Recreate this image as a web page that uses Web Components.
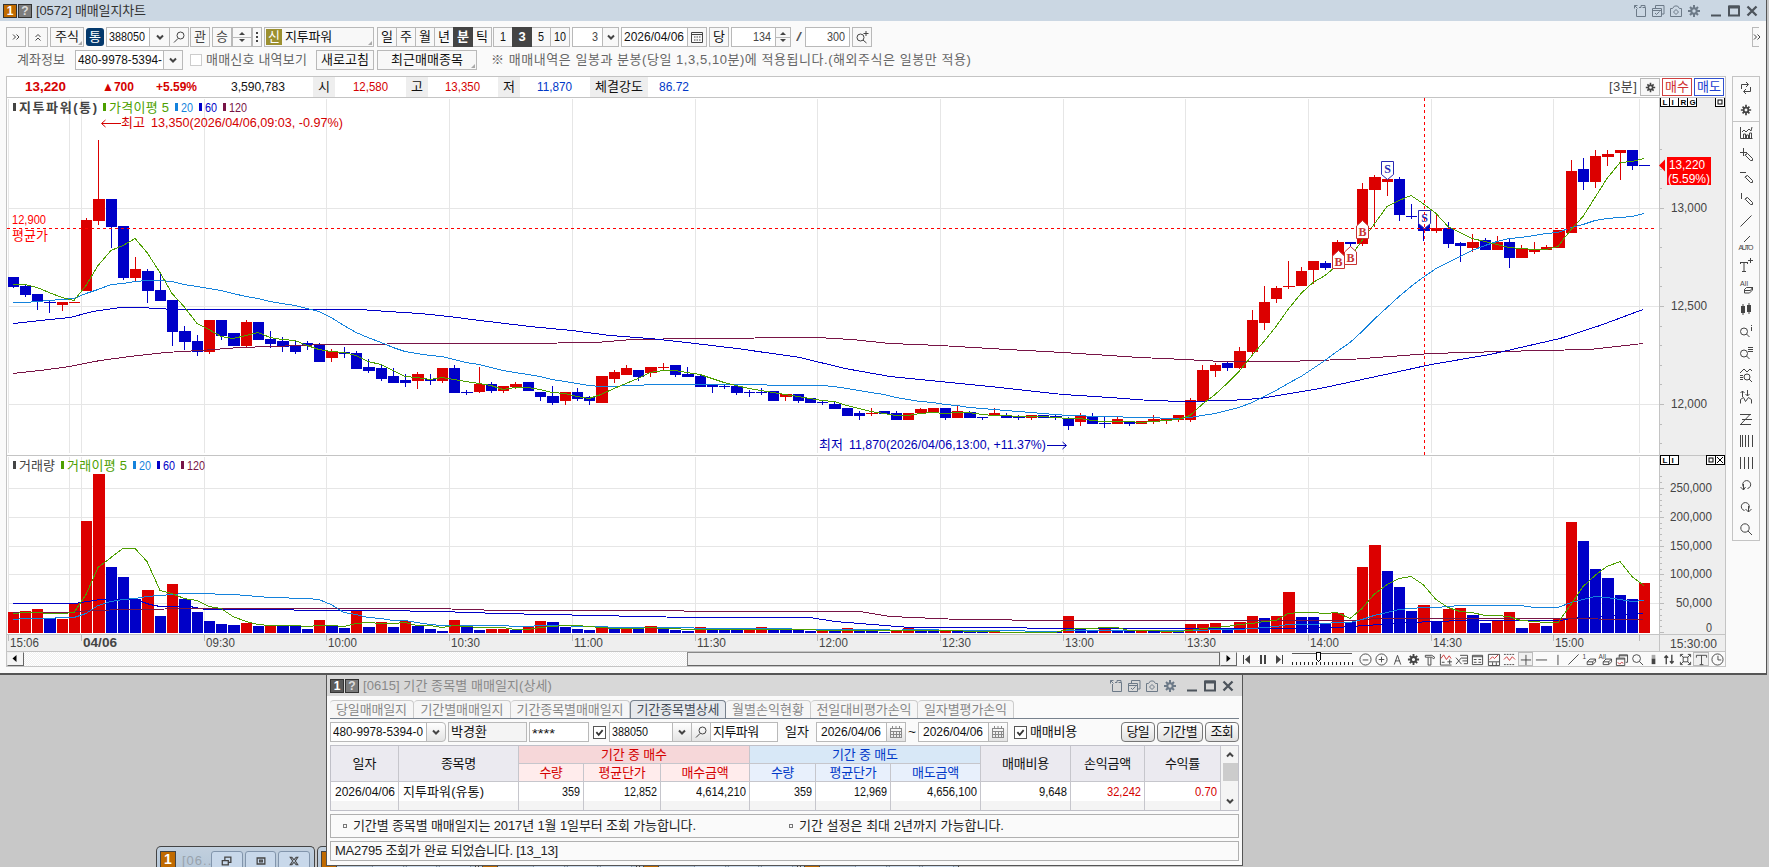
<!DOCTYPE html>
<html lang="ko">
<head>
<meta charset="utf-8">
<title>매매일지차트</title>
<style>
    html, body { margin: 0; height: 100%; overflow: hidden; background: #c8c8c8; }
</style>
</head>
<body>
<trade-desktop></trade-desktop>
<script>
const FONT = '"Liberation Sans","Noto Sans CJK KR",sans-serif';
const HANGUL = /[가-힣]/;

class BaseElement extends HTMLElement {
    constructor() {
        super();
        this.attachShadow({mode: "open"});
    }
    connectedCallback() {
        this.shadowRoot.innerHTML = this.render();
    }
}

/* text fitted to a fixed width: figures are condensed, Hangul is spaced */
class FitText extends BaseElement {
    render() {
        return `<style>
            :host { display: block; white-space: pre; flex: none; line-height: 16px; }
            span { display: inline-block; transform-origin: 0 50%; }
        </style><span><slot></slot></span>`;
    }
    connectedCallback() {
        super.connectedCallback();
        const w = Number(this.getAttribute('w'));
        this.style.width = w + 'px';
        const span = this.shadowRoot.querySelector('span');
        const natural = span.getBoundingClientRect().width;
        const n = this.textContent.length;
        if (!HANGUL.test(this.textContent)) {
            span.style.transform = `scaleX(${w / natural})`;
        } else if (n > 1) {
            span.style.letterSpacing = ((w - natural) / (n - 0.5)) + 'px';
        }
    }
}
customElements.define('fit-text', FitText);

const GEAR = '<path d="M7 1v12M1 7h12M3 3l8 8M11 3l-8 8" stroke-width="2"/><circle cx="7" cy="7" r="2.7" stroke-width="2" fill="var(--hole,#fafafa)"/>';
const ERASER = '<path d="M4.500 9.500l3-3h6l-3 3zM4.500 9.500v3h6v-3M10.500 12.500l3-3v-3"/>';
const PEN = '<path d="M6.500 6.500l2 -1 5 5v2h-2l-5-5zM8 5.500l-2 2"/>';
const ICONS = {
    right2: '<path d="M4 4.500l2.500 2.500-2.500 2.500M7.500 4.500l2.500 2.500-2.500 2.500"/>',
    up2: '<path d="M4.500 7l2.500-2.500 2.500 2.500M4.500 10.500l2.500-2.500 2.500 2.500"/>',
    down: '<path d="M4 5.500l3 3 3-3" stroke-width="2"/>',
    up: '<path d="M4 8.500l3-3 3 3" stroke-width="2"/>',
    find: '<circle cx="8.500" cy="5.500" r="3.500"/><path d="M6 8.500l-4 4"/>',
    zoom: '<circle cx="6" cy="6" r="4.200"/><path d="M9 9l4 4"/>',
    findplus: '<circle cx="5.500" cy="7.500" r="3.500"/><path d="M8 10l3.500 3M11 1v5M8.500 3.500h5"/>',
    cal: '<path d="M1.500 2.500h11v10h-11zM1.500 4.500h11" /><path d="M4 7h1.500M6.500 7h1.500M9 7h1.500M4 10h1.500M6.500 10h1.500M9 10h1.500"/>',
    cal2: '<path d="M1 3.500h12M1.500 4v9M4.500 6v7M7.500 6v7M10.500 6v7M12.500 4v9M1 6.500h12M1 9.500h12M1 12.500h12M3.500 1v3M7 1v3M10.500 1v3" stroke="#888"/>',
    dots: '<path d="M6 2h2v2h-2zM6 6h2v2h-2zM6 10h2v2h-2z" fill="#444" stroke="none"/>',
    gear: GEAR,
    pin: '<path d="M3.500 5v7.500h9v-9h-3M1.500 4.500v-3h3M1.500 1.500l3 3M6 3.500h2v-2h4v2"/>',
    copy: '<path d="M1.500 4.500h9v8h-9zM1.500 6.500h9M4.500 4v-2.500h8.500v8.500h-2.500M4 9l1.500 1.500 3-3"/>',
    camera: '<path d="M1.500 4.500h2l2-2.500h3l2 2.500h2v8h-11z"/><path d="M7 5.500l2.500 2.500-2.500 2.500-2.500-2.500z"/>',
    min: '<path d="M2 11.500h10" stroke-width="2"/>',
    max: '<path d="M2 2.500h10v9h-10z" stroke-width="2"/><path d="M2 3h10" stroke-width="3"/>',
    close: '<path d="M2.500 2.500l9 9M11.500 2.500l-9 9" stroke-width="2.300"/>',
    restore: '<path d="M1.500 6.500h7v5h-7zM4.500 6v-3.500h7v6h-3" stroke-width="1.500"/>',
    smallmax: '<path d="M2.500 3.500h9v7h-9zM5.500 6h3v2h-3z" stroke-width="1.500"/>',
    cross2: '<path d="M2.500 2.500h2l2.500 3 2.500-3h2l-3 4.500 3 4.500h-2l-2.500-3-2.500 3h-2l3-4.500z" stroke-width="1.200"/>',
    cycle: '<path d="M2.500 8v-4.500h6.500M7 1l2.500 2.500-2.500 2.500M11.500 6v4.500h-6.500M7 8l-2.500 2.500 2.500 2.500"/>',
    chart: '<path d="M1.500 1v11.500h12M4.500 12v-4h2v4M7.500 12v-3h2v3M10.500 12v-5h2v5M3 6l2-2 2 2 3-3 2 2 1-4"/>',
    plusline: '<path d="M4.500 0v8M1 4.500h7"/>' + PEN,
    hline: '<path d="M1 2.500h6"/>' + PEN,
    vline: '<path d="M2.500 1v6"/>' + PEN,
    line: '<path d="M1.500 12.500l11-11"/>',
    auto: '<path d="M5 6l6-6"/><text x="-0.500" y="14" textLength="15">AUTO</text>',
    textplus: '<path d="M1 4.500h8M5 4.500v9M3 13.500h4M1.500 4v2M8.500 4v2M11.500 0v5M9 2.500h5"/>',
    all: '<text x="1" y="6" textLength="8">All</text><path d="M5.500 9.500l2-2h6l-2 3h-6zM5.500 9.500v3.500h5l3-3v-3"/>',
    candles: '<path d="M2 4h4v7h-4zM8 3h4v7h-4zM3.500 2h1v11h-1zM9.500 1h1v11h-1z" fill="#444" stroke="none"/>',
    findi: '<circle cx="5" cy="7.500" r="3.500"/><path d="M7.500 10l3 3M12.500 3v4M12.500 1v1"/>',
    findlist: '<circle cx="5" cy="7.500" r="3.500"/><path d="M7.500 10l3 3M9 1.500h5M9 3.500h5M9 5.500h5"/>',
    findchart: '<circle cx="8" cy="9" r="3"/><path d="M10 11l3 3M1 5l4-4 3 3 3-3 2 2M1 7.500h3M1 9.500h3M1 11.500h3"/>',
    peaks: '<path d="M3.500 1v6M1.500 3l2-2 2 2M8.500 0v6M6.500 4l2 2 2-2M1.500 13.500v-4l3-2 2 4 3-4 3 2v4"/>',
    trend: '<path d="M1 2.500h11M3 7.500h10M1 12.500h11M2 12l9-9.500"/>',
    bars1: '<path d="M1.500 1v12M3.500 1v12M6.500 1v12M9.500 1v12M13.500 1v12"/>',
    bars2: '<path d="M1.500 1v12M5.500 1v12M9.500 1v12M13.500 1v12"/>',
    back: '<path d="M4.500 9a4 4 0 1 1 4 1.500M4.500 6v6M1.500 9l3 3 2-3"/>',
    forward: '<path d="M9.500 9a4 4 0 1 0-4 1.500M9.500 6v6M6.500 9l3 3 3-3"/>',
    zoomout: '<circle cx="7" cy="7" r="6"/><path d="M4 7.500h6"/>',
    zoomin: '<circle cx="7" cy="7" r="6"/><path d="M4 7h6M7 4v6"/>',
    letter: '<path d="M3.500 12.500l3.500-10 3.500 10M4.500 8.500h5"/>',
    hammer: '<path d="M2.500 2.500h7l3 2-1 2-2-2h-7zM5.500 5v8h3v-8"/>',
    addchart: '<path d="M1.500 1v12h12M3 10h3"/><path d="M2 6l3-4 3 5 3-4 2 3" stroke="#c33"/><path d="M9 9.500h5M11.500 7v5"/>',
    excel: '<path d="M5.500 2.500h8v9h-4M1 5l6 7M7 5l-6 7M7 5.500h6M8 8.500h5"/>',
    table: '<path d="M1.500 2.500h11v10h-11zM1.500 4h11M3 7h3M8 7h3M3 10h3M8 10h3"/>',
    panel: '<path d="M1.500 1.500h12v12h-12zM2 9.500h11M6 10v3M10 10v3"/><path d="M3 7l3-3 2 2 4-4" stroke="#c33"/>',
    wave: '<path d="M1 1.500h12M1 12.500h12" stroke-dasharray="2 1"/><path d="M1 7l3-3 3 4 3-4 3 3" stroke="#c33"/>',
    cross: '<path d="M7.500 2v11M2 7.500h11"/>',
    dash: '<path d="M1 7.500h12"/>',
    pipe: '<path d="M7.500 2v11"/>',
    erase1: '<text x="-0.500" y="6">1</text>' + ERASER,
    eraseall: '<text x="-0.500" y="6" textLength="8">All</text>' + ERASER,
    windows: '<path d="M1.500 5.500h9v8h-9zM1.500 6.500h9M4.500 5v-3h9v8h-2M4.500 3h9"/><path d="M3 10l2 2 2-2 2 1" stroke="#c33"/>',
    level: '<path d="M5 2h4v4h-4z" fill="#aaa" stroke="none"/><path d="M5 6h4v6h-4z" fill="#444" stroke="none"/>',
    updown: '<path d="M3.500 12v-9M1.500 5l2-2 2 2M9.500 2v9M7.500 9l2 2 2-2" stroke-width="1.500"/>',
    expand: '<path d="M4.500 4.500h5v5h-5zM1.500 4v-2.500h3M9.500 1.500h3v3M12.500 9.500v3h-3M4 12.500h-2.500v-3M2 2l3 3M12 2l-3 3M12 12l-3-3M2 12l3-3"/>',
    type: '<path d="M1.500 5v-2.500h11v2.500M7 2.500v10M5 12.500h4"/>',
    clock: '<circle cx="7" cy="7" r="6"/><path d="M7.500 3v4.500h3.500"/>',
    first: '<path d="M3.500 3v9"/><path d="M10 3v9l-5-4.500z" fill="#444" stroke="none"/>',
    pause: '<path d="M4 3h2v9h-2zM8 3h2v9h-2z" fill="#444" stroke="none"/>',
    last: '<path d="M10.500 3v9"/><path d="M4 3v9l5-4.500z" fill="#444" stroke="none"/>',
    check: '<path d="M3 6.500l3 3.500 5-6" stroke-width="2.200"/>',
    left1: '<path d="M8.500 4v7l-4-3.500z" fill="#000" stroke="none"/>',
    right1: '<path d="M5.500 4v7l4-3.500z" fill="#000" stroke="none"/>'
};

class UiIcon extends BaseElement {
    render() {
        return `<style>
            :host { display: block; width: 14px; height: 14px; flex: none; color: #444; }
            svg { display: block; overflow: visible; fill: none; stroke: currentColor; }
            text { font: 7px ${FONT}; fill: #444; stroke: none; }
        </style><svg width="100%" height="100%" viewBox="0 0 14 14">${ICONS[this.getAttribute('name')]}</svg>`;
    }
}
customElements.define('ui-icon', UiIcon);

class ToolButton extends BaseElement {
    render() {
        return `<style>
            :host { display: flex; align-items: center; justify-content: center; box-sizing: border-box; flex: none;
                    width: 20px; height: 20px; border: 1px solid #b9b9b9; background: #f8f8f8; color: #111; position: relative; line-height: 16px; }
            :host([on]) { background: #444; border-color: #444; color: #fff; font-weight: bold; z-index: 1; }
            :host([field]) { background: #fff; justify-content: flex-start; padding-left: 2px; }
            :host([num]) { background: #fff; justify-content: flex-end; padding-right: 4px; color: #444; }
            :host([corner])::after { content: ""; position: absolute; right: 1px; bottom: 1px; border: 2.5px solid; border-color: transparent #aaa #aaa transparent; }
        </style><slot></slot>`;
    }
}
customElements.define('tool-button', ToolButton);

class SpinButton extends BaseElement {
    render() {
        return `<style>
            :host { display: flex; flex-direction: column; justify-content: space-evenly; align-items: center; box-sizing: border-box; flex: none;
                    width: 20px; height: 20px; border: 1px solid #b9b9b9; background: linear-gradient(#f8f8f8 9px, #b9b9b9 9px, #b9b9b9 10px, #f8f8f8 10px); }
            i { border: 3px solid transparent; border-top: 0; border-bottom-color: #444; }
            i + i { transform: rotate(180deg); }
        </style><i></i><i></i>`;
    }
}
customElements.define('spin-button', SpinButton);

class CheckBox extends BaseElement {
    render() {
        return `<style>
            :host { display: block; box-sizing: border-box; flex: none; width: 13px; height: 13px; border: 1px solid #555; background: #fff; }
            ui-icon { width: 11px; height: 11px; color: #333; }
        </style>${this.hasAttribute('checked') ? '<ui-icon name="check"></ui-icon>' : ''}`;
    }
}
customElements.define('check-box', CheckBox);

class WindowBar extends BaseElement {
    render() {
        return `<style>
            :host { display: flex; align-items: center; height: 21px; flex: none; background: #cbd7e3; color: #333; --badge: #c06a00; --hole: #cbd7e3; }
            :host([idle]) { background: #d8d8d8; color: #888; --badge: #5a5a5a; --hole: #d8d8d8; }
            b { box-sizing: border-box; width: 14px; height: 14px; margin-left: 1px; border: 1px solid #333; background: var(--badge); color: #fff; font: bold 12px/12px "Liberation Sans"; text-align: center; }
            b + b { background: #7c7c7c; color: #ddd; margin-right: 4px; }
            nav { margin-left: auto; display: flex; align-items: center; margin-right: 7px; }
            nav ui-icon { color: #6d7a88; margin-left: 4px; }
            nav ui-icon[name=min], nav ui-icon[name=max], nav ui-icon[name=close] { color: #4d545c; }
        </style>
        <b style="margin-left:3px">1</b><b>?</b><slot></slot>
        <nav>
            <ui-icon name="pin"></ui-icon><ui-icon name="copy"></ui-icon><ui-icon name="camera"></ui-icon><ui-icon name="gear"></ui-icon>
            <ui-icon name="min" style="margin-left:8px"></ui-icon><ui-icon name="max"></ui-icon><ui-icon name="close"></ui-icon>
        </nav>`;
    }
}
customElements.define('window-bar', WindowBar);

/* first toolbar row */
class ToolbarMain extends BaseElement {
    render() {
        return `<style>
            :host { display: flex; height: 20px; align-items: center; padding: 6px 0 0 6px; }
            .m { margin-left: 2px; } .j { margin-left: -1px; }
            .tong { width: 18px; height: 18px; border-radius: 3px; background: #04396c; color: #fff; font: 13px/17px ${FONT}; text-align: center; }
            .sin { width: 16px; height: 16px; margin-right: 3px; background: #9c9030; color: #fff; font: 13px/15px ${FONT}; text-align: center; }
            .tail { margin: 0 7px 0 auto; width: 7px; border-right: 0; justify-content: flex-start; }
        </style>
        <tool-button><ui-icon name="right2"></ui-icon></tool-button>
        <tool-button class="m"><ui-icon name="up2"></ui-icon></tool-button>
        <tool-button class="m" corner style="width:34px"><fit-text w="24">주식</fit-text></tool-button>
        <div class="tong m">통</div>
        <tool-button class="m" field style="width:44px"><fit-text w="36">388050</fit-text></tool-button>
        <tool-button class="j" style="width:21px"><ui-icon name="down"></ui-icon></tool-button>
        <tool-button class="j"><ui-icon name="find"></ui-icon></tool-button>
        <tool-button style="margin-left:1px;color:#444">관</tool-button>
        <tool-button class="m" style="color:#444">승</tool-button>
        <spin-button></spin-button>
        <tool-button style="width:10px"><ui-icon name="dots"></ui-icon></tool-button>
        <tool-button class="m" field corner style="width:110px;padding-left:1px;background:#f8f8f8"><div class="sin">신</div><fit-text w="47">지투파워</fit-text></tool-button>
        <tool-button style="margin-left:3px">일</tool-button><tool-button class="j">주</tool-button><tool-button class="j">월</tool-button><tool-button class="j">년</tool-button><tool-button class="j" on>분</tool-button><tool-button class="j">틱</tool-button>
        <tool-button style="margin-left:1px"><fit-text w="6">1</fit-text></tool-button><tool-button class="j" on>3</tool-button><tool-button class="j"><fit-text w="6">5</fit-text></tool-button><tool-button class="j"><fit-text w="12">10</fit-text></tool-button>
        <tool-button class="m" num style="width:31px"><fit-text w="6">3</fit-text></tool-button>
        <tool-button class="j" style="width:17px"><ui-icon name="down"></ui-icon></tool-button>
        <tool-button class="m" field style="width:67px"><fit-text w="60">2026/04/06</fit-text></tool-button>
        <tool-button class="j"><ui-icon name="cal"></ui-icon></tool-button>
        <tool-button class="m">당</tool-button>
        <tool-button class="m" num style="width:45px"><fit-text w="18">134</fit-text></tool-button>
        <spin-button class="j" style="width:16px"></spin-button>
        <fit-text w="6" style="margin:0 3px 0 5px;color:#555">/</fit-text>
        <tool-button num style="width:45px"><fit-text w="18">300</fit-text></tool-button>
        <tool-button class="m"><ui-icon name="findplus"></ui-icon></tool-button>
        <tool-button class="tail"><ui-icon name="right2" style="margin-left:-3px"></ui-icon></tool-button>`;
    }
}
customElements.define('toolbar-main', ToolbarMain);

class ToolbarAccount extends BaseElement {
    render() {
        return `<style>
            :host { display: flex; height: 20px; align-items: center; padding: 3px 0 6px 17px; color: #666; }
            check-box { width: 12px; height: 12px; margin-left: 7px; border-color: #ccc; }
        </style>
        <fit-text w="48">계좌정보</fit-text>
        <tool-button field style="width:89px;margin-left:10px"><fit-text w="84">480-9978-5394-</fit-text></tool-button>
        <tool-button style="margin-left:-1px"><ui-icon name="down"></ui-icon></tool-button>
        <check-box></check-box>
        <fit-text w="101" style="margin-left:4px">매매신호 내역보기</fit-text>
        <tool-button style="width:58px;margin-left:9px"><fit-text w="48">새로고침</fit-text></tool-button>
        <tool-button corner style="width:100px;margin-left:3px"><fit-text w="72">최근매매종목</fit-text></tool-button>
        <fit-text w="480" style="margin-left:14px">※ 매매내역은 일봉과 분봉(당일 1,3,5,10분)에 적용됩니다.(해외주식은 일봉만 적용)</fit-text>`;
    }
}
customElements.define('toolbar-account', ToolbarAccount);

class QuoteBar extends BaseElement {
    render() {
        return `<style>
            :host { display: flex; align-items: center; box-sizing: border-box; height: 22px; background: #fff; border: 1px solid #c4c4c4; flex: none; color: #111; }
            .r { color: #d40000; } .u { color: #0038c8; }
            .k { display: flex; align-items: center; justify-content: center; width: 22px; height: 20px; background: #eee; }
            tool-button { height: 18px; margin-left: 2px; --hole: #f8f8f8; }
            .buy { width: 30px; background: #fff; border-color: #d04040; color: #d03030; }
            .sell { width: 30px; background: #fff; border-color: #3050d0; color: #2040d0; margin-right: 1px; }
        </style>
        <fit-text class="r" w="41" style="margin-left:18px;font-weight:bold">13,220</fit-text>
        <fit-text class="r" w="32" style="margin-left:36px;font-weight:bold">▲700</fit-text>
        <fit-text class="r" w="41" style="margin-left:22px;font-weight:bold">+5.59%</fit-text>
        <fit-text w="54" style="margin-left:34px">3,590,783</fit-text>
        <div class="k" style="margin-left:28px">시</div><fit-text class="r" w="35" style="margin-left:18px">12,580</fit-text>
        <div class="k" style="margin-left:18px">고</div><fit-text class="r" w="35" style="margin-left:17px">13,350</fit-text>
        <div class="k" style="margin-left:18px">저</div><fit-text class="u" w="35" style="margin-left:17px">11,870</fit-text>
        <div class="k" style="margin-left:18px;width:58px"><fit-text w="48">체결강도</fit-text></div><fit-text class="u" w="30" style="margin-left:11px">86.72</fit-text>
        <fit-text w="28" style="margin-left:auto;color:#444">[3분]</fit-text>
        <tool-button style="margin-left:3px"><ui-icon name="gear" style="width:11px;height:11px"></ui-icon></tool-button>
        <tool-button class="buy"><fit-text w="24">매수</fit-text></tool-button>
        <tool-button class="sell"><fit-text w="24">매도</fit-text></tool-button>`;
    }
}
customElements.define('quote-bar', QuoteBar);

/* candles: direction, body top, body bottom, wick top, wick bottom */
const CANDLES = `b277,287,277,288 b286,295,285,297 b294,302,294,310 b302,303,300,313 r302,305,302,311 r302,303,302,303
r220,291,218,291 r199,221,140,225 b199,227,199,248 b226,278,226,280 r269,278,257,281 b271,291,269,303 b290,301,273,301 b300,332,300,346
b331,342,326,350 b341,352,335,356 r320,352,320,354 b320,336,320,340 b333,346,333,346 r322,346,320,347 b322,340,322,340 b339,344,331,348
b341,347,337,352 b346,352,341,354 b343,345,341,350 b345,362,343,362 r351,358,349,362 b352,354,347,358 b353,369,351,369 b367,371,359,373
b368,379,364,381 b376,383,368,383 b380,383,374,387 r374,381,372,389 b379,381,374,385 r368,381,368,383 b368,393,365,393 b392,393,390,395
r384,392,367,393 b384,391,382,393 r386,391,386,393 r384,387,382,389 b382,391,382,391 b392,397,392,401 b396,403,386,405 r392,401,392,405
b392,399,388,401 b397,401,396,405 r376,403,376,403 r372,379,370,383 r368,375,365,375 b370,377,370,381 r367,373,367,377 r367,368,363,370
b365,375,365,377 b374,377,367,377 b376,387,374,387 b384,387,384,393 b386,387,384,389 b386,393,384,395 b392,393,390,397 b392,393,388,395
b391,401,391,401 r394,397,394,401 b394,401,394,403 b398,403,398,403 b402,403,400,405 b404,409,402,409 b408,416,408,416 b413,416,411,420
r413,414,408,416 b411,414,411,414 b413,420,411,420 r413,420,413,420 r409,413,408,413 r408,412,408,412 b408,418,408,420 r411,418,405,418
b412,418,411,418 b417,418,417,420 r413,416,408,416 b415,418,413,418 b416,418,415,420 r415,418,415,420 b415,418,415,418 b416,418,415,420
b419,426,417,430 r416,422,413,426 b416,424,413,424 b423,424,417,428 r419,424,417,424 b421,424,421,426 r421,424,421,424 r419,422,415,424
r418,421,418,424 r415,420,415,422 r400,420,398,422 r370,401,365,401 r365,371,363,377 b363,368,362,371 r351,368,347,369 r320,352,310,356
r302,323,286,330 r288,299,286,303 r286,287,261,289 r271,286,267,286 r261,270,261,284 b263,268,261,270 r242,262,240,262 b242,244,242,247
r189,244,183,246 r177,190,175,227 r179,182,179,196 b179,215,177,221 b216,217,204,219 b216,231,216,241 r228,231,214,233 b228,244,222,248
b243,246,242,262 r242,248,234,252 b240,250,238,250 r242,250,236,250 b242,258,238,268 r249,258,245,258 r249,252,242,254 r247,250,245,250
r230,248,230,248 r171,233,160,233 b169,182,158,190 r156,182,150,188 r154,157,150,166 r150,153,150,180 b150,166,150,170 b165,166,165,166`
    .split(/\s+/).map(s => [s[0], ...s.slice(1).split(',').map(Number)]);

/* volume: colour and bar top, baseline 633 */
const VOLUMES = `r612 r611 r609 b618 r619 r603 r521 r474 b567 b577 b599 r590 b616 r584 b599 b612 b621 b624 b625 r623 b626 r625 b625 b626
b629 r620 b625 b628 r611 b627 r622 b627 r621 b626 b629 b631 r620 b625 b630 r629 r629 b630 r627 r621 b622 b627 b629 b630 r626 b629
r627 b628 r626 b629 b630 b631 r627 b629 b630 b630 r629 r627 b628 b629 b630 b631 r630 b629 r628 b630 b631 b632 r630 r628 b630 b631
r630 b631 b632 b632 r631 b632 b632 r631 b632 b632 r616 b629 b630 r629 b630 b631 r631 b631 r631 b632 r624 r624 r623 b628 r622 r616
b618 r616 r592 b617 b617 b623 r613 b622 r567 r545 b571 b587 b611 r605 b621 r609 r608 b615 b623 r621 r612 b628 r623 b626 r619 r522
b541 b569 b578 b595 b599 r583`.split(/\s+/).map(s => [s[0], Number(s.slice(1))]);

const STEP = 12.268;
const X_GRID = [8, 69, 81, 204, 326, 449, 572, 695, 817, 940, 1063, 1185, 1308, 1431, 1553, 1639];
const FILL = {r: '#dc0000', b: '#0000c8'};
const MA = {5: '#4d9f00', 20: '#1482dc', 60: '#0000c8', 120: '#781446'};

const barX = i => Math.floor(8 + STEP * i);
const barW = i => barX(i + 1) - barX(i) - 1;
const midX = i => barX(i) + 5;

function movingAverage(values, n, head) {
    const pts = head.map((y, i) => [midX(i), y]);
    for (let i = head.length; i < values.length; i++) {
        const part = values.slice(i - n + 1, i + 1);
        pts.push([midX(i), part.reduce((a, b) => a + b, 0) / n]);
    }
    return pts;
}
function line(pts, color) {
    return `<polyline points="${pts.map(p => p[0] + ',' + (Math.round(p[1]) + 0.5)).join(' ')}" fill="none" stroke="${color}"/>`;
}
function label(x, y, w, text, fill, extra = '') {
    const adjust = HANGUL.test(text) ? 'spacing' : 'spacingAndGlyphs';
    return `<text x="${x}" y="${y}" textLength="${w}" lengthAdjust="${adjust}" fill="${fill}" ${extra}>${text}</text>`;
}
function grid(y1, y2, rows) {
    return X_GRID.map(x => `<rect x="${x}" y="${y1}" width="1" height="${y2 - y1}" fill="#e6e6e6"/>`).join('')
        + rows.map(y => `<rect x="8" y="${y}" width="1651" height="1" fill="#e6e6e6"/>`).join('');
}
function axisBox(x, y, t) {
    const mark = t === '□' ? `<rect x="${x + 3}" y="${y + 3}" width="4" height="4" fill="none" stroke="#000"/>`
        : t === '✕' ? `<path d="M${x + 2} ${y + 2}l6 6m0-6l-6 6" stroke="#000"/>`
        : `<text x="${x + 2.500}" y="${y + 8}" style="font:bold 8px Liberation Sans">${t}</text>`;
    return `<rect x="${x + 0.500}" y="${y + 0.500}" width="9" height="9" fill="#fff" stroke="#000"/>${mark}`;
}
function legend(y, name, nameW, maName, bold) {
    let x = 13, out = '';
    const item = (color, text, w, style = '') => {
        out += `<rect x="${x}" y="${y - 9}" width="3" height="8" fill="${color}"/>` + label(x + 6, y, w, text, color, style);
        x += w + 12;
    };
    item('#444', name, nameW, bold ? 'font-weight="bold"' : '');
    item(MA[5], maName + ' 5', 60);
    item(MA[20], '20', 12);
    item(MA[60], '60', 12);
    item(MA[120], '120', 18);
    return out;
}
const CHART_STYLE = `<style>
    :host { display: block; flex: none; }
    svg { display: block; font: 13px ${FONT}; }
    .px { shape-rendering: crispEdges; }
    text { white-space: pre; }
</style>`;

class PriceChart extends BaseElement {
    marker(x, y, t) {
        const c = t === 'B' ? '#c83232' : '#2828b4';
        const d = t === 'B' ? `M${x + 0.500} ${y + 5}l6 -5.500 6 5.500v12.500h-12z` : `M${x + 0.500} ${y + 0.500}h12v13l-6 5-6-5z`;
        return `<path d="${d}" fill="#fff" stroke="${c}"/><text x="${x + (t === 'B' ? 2.500 : 3.200)}" y="${y + (t === 'B' ? 15 : 12)}" fill="${c}" style="font:bold 12px Liberation Serif">${t}</text>`;
    }
    render() {
        const close = CANDLES.map(c => c[0] === 'r' ? c[1] : c[2] - 1);
        const ma20 = [302, 302, 301, 299.7, 299, 298, 293, 288.5, 284, 283, 281, 280, 279.5, 281, 283.5, 286, 287.5, 290, 292.5];
        const ma60 = [[13, 323], [50, 319], [70, 316.5], [93, 311], [120, 307], [140, 307], [175, 308.6], [360, 308.6], [388, 310.5], [420, 313], [449, 316], [480, 319.5], [530, 326], [572, 330], [610, 334.5], [650, 338], [695, 343], [737, 348], [800, 357], [845, 368], [890, 376], [940, 381], [990, 386], [1063, 393.5], [1110, 397], [1150, 400], [1185, 401], [1230, 400], [1260, 398], [1320, 388], [1390, 373], [1431, 364], [1490, 354], [1560, 338], [1600, 325], [1643, 309]];
        const ma120 = [[13, 373], [40, 370], [70, 366], [100, 360], [130, 356], [165, 352], [200, 350], [240, 347], [300, 345], [325, 344], [449, 343], [520, 343], [596, 342], [632, 339], [695, 338], [817, 337], [852, 339], [890, 342.500], [940, 345], [990, 348], [1063, 352], [1140, 357], [1185, 359], [1222, 361], [1290, 361], [1310, 360], [1350, 359], [1390, 355.500], [1431, 353], [1466, 352], [1540, 349.500], [1590, 349], [1643, 343]];
        let ticks = '';
        for (let k = -3; k <= 12; k++) {
            const y = Math.round(208 + k * 19.600);
            ticks += `<rect x="1660" y="${y}" width="${k % 5 ? 2 : 4}" height="1" fill="#bbb"/>`;
        }
        return CHART_STYLE + `<svg width="1719" height="357" viewBox="7 98 1719 357">
            <rect x="7" y="98" width="1652" height="357" fill="#fff"/>
            <rect x="1659" y="98" width="66" height="357" fill="#eee"/>
            <g class="px">${grid(99, 453, [208, 306, 404])}${ticks}
            ${CANDLES.map((c, i) => `<rect x="${barX(i)}" y="${c[1]}" width="${barW(i)}" height="${c[2] - c[1]}" fill="${FILL[c[0]]}"/>
                <rect x="${midX(i)}" y="${c[3]}" width="1" height="${c[4] - c[3]}" fill="${FILL[c[0]]}"/>`).join('')}
            ${line(ma120, MA[120])}${line(ma60, MA[60])}
            ${line(movingAverage(close, 20, ma20), MA[20])}
            ${line(movingAverage(close, 5, [284, 284, 287, 292, 297]), MA[5])}
            <path d="M7 228.500H1655" stroke="#f00" stroke-dasharray="3 3"/></g>
            ${this.marker(1332, 251, 'B')}${this.marker(1344, 247, 'B')}${this.marker(1356, 221, 'B')}
            ${this.marker(1381, 161, 'S')}${this.marker(1418, 210, 'S')}
            <g class="px"><path d="M1424.500 98V455" stroke="#f00" stroke-dasharray="3 3"/>
            <rect x="1659" y="98" width="1" height="357" fill="#c4c4c4"/><rect x="1725" y="98" width="1" height="357" fill="#c4c4c4"/></g>
            ${legend(112, '지투파워(통)', 78, '가격이평', true)}
            <path d="M121 123.500H102M105.500 120l-4 3.500 4 3.500" stroke="#d40000" fill="none"/>
            ${label(121, 127, 24, '최고', '#d40000')}${label(151, 127, 192, '13,350(2026/04/06,09:03, -0.97%)', '#d40000')}
            ${label(819, 449, 24, '최저', '#0000b4')}${label(849, 449, 197, '11,870(2026/04/06,13:00, +11.37%)', '#0000b4')}
            <path d="M1047 445.500h19M1062.500 442l4 3.500-4 3.500" stroke="#0000b4" fill="none"/>
            ${label(12, 224, 34, '12,900', '#f00')}${label(12, 240, 36, '평균가', '#f00')}
            ${label(1671, 212, 36, '13,000', '#444')}${label(1671, 310, 36, '12,500', '#444')}${label(1671, 408, 36, '12,000', '#444')}
            <path d="M1659 165.500l6-6v12z" fill="#f00"/><rect x="1667" y="157" width="44" height="28" fill="#f00"/>
            ${label(1669, 169, 36, '13,220', '#fff')}${label(1668, 183, 42, '(5.59%)', '#fff')}
            ${axisBox(1660, 97, 'L')}${axisBox(1669, 97, 'I')}${axisBox(1678, 97, 'R')}${axisBox(1687, 97, 'G')}${axisBox(1715, 97, '□')}
        </svg>`;
    }
}
customElements.define('price-chart', PriceChart);

class VolumeChart extends BaseElement {
    render() {
        const tops = VOLUMES.map(v => v[1]);
        const ma20 = [619, 618, 618, 618, 617, 617, 613, 605, 601, 599, 598, 596, 595, 594, 593, 593, 593, 594, 594];
        const ma60 = [[13, 603], [75, 603], [100, 599], [135, 599], [150, 604], [160, 606], [190, 606], [205, 609], [380, 610], [440, 611], [500, 613], [690, 617], [810, 617], [835, 621], [910, 627], [1140, 628], [1285, 628], [1337, 627], [1380, 624], [1431, 621], [1468, 620], [1561, 620], [1570, 618], [1600, 616], [1643, 613]];
        const ma120 = [[13, 612], [69, 612], [90, 610], [130, 609], [200, 608], [435, 608], [500, 610], [860, 611], [890, 616], [960, 619], [1063, 620], [1353, 620], [1377, 618], [1553, 618], [1643, 619]];
        let ticks = '';
        for (let k = 0; k <= 27; k++) {
            ticks += `<rect x="1660" y="${Math.round(632 - k * 5.760)}" width="${k % 5 ? 2 : 4}" height="1" fill="#bbb"/>`;
        }
        return CHART_STYLE + `<svg width="1719" height="180" viewBox="7 455 1719 180">
            <rect x="7" y="455" width="1652" height="180" fill="#fff"/>
            <rect x="1659" y="455" width="66" height="180" fill="#eee"/>
            <g class="px">${grid(457, 633, [488, 517, 546, 574, 603])}${ticks}
            ${VOLUMES.map((v, i) => `<rect x="${barX(i)}" y="${v[1]}" width="${barW(i)}" height="${633 - v[1]}" fill="${FILL[v[0]]}"/>`).join('')}
            ${line(ma60, MA[60])}${line(ma120, MA[120])}
            ${line(movingAverage(tops, 20, ma20), MA[20])}
            ${line(movingAverage(tops, 5, [613, 612, 612, 613, 613]), MA[5])}
            <rect x="7" y="455" width="1719" height="1" fill="#c4c4c4"/><rect x="7" y="634" width="1719" height="1" fill="#c4c4c4"/>
            <rect x="1659" y="455" width="1" height="180" fill="#c4c4c4"/><rect x="1725" y="455" width="1" height="180" fill="#c4c4c4"/></g>
            ${legend(470, '거래량', 36, '거래이평')}
            ${label(1670, 492, 42, '250,000', '#444')}${label(1670, 521, 42, '200,000', '#444')}${label(1670, 550, 42, '150,000', '#444')}
            ${label(1670, 578, 42, '100,000', '#444')}${label(1676, 607, 36, '50,000', '#444')}${label(1706, 632, 6, '0', '#444')}
            ${axisBox(1660, 455, 'L')}${axisBox(1669, 455, 'I')}${axisBox(1706, 455, '□')}${axisBox(1715, 455, '✕')}
        </svg>`;
    }
}
customElements.define('volume-chart', VolumeChart);

class TimeAxis extends BaseElement {
    render() {
        const names = ['15:06', null, '04/06', '09:30', '10:00', '10:30', '11:00', '11:30', '12:00', '12:30', '13:00', '13:30', '14:00', '14:30', '15:00', ''];
        return CHART_STYLE + `<svg width="1719" height="17" viewBox="7 635 1719 17">
            <rect x="7" y="635" width="1719" height="17" fill="#eee"/>
            <g class="px"><rect x="7" y="651" width="1719" height="1" fill="#c4c4c4"/>
            <rect x="1659" y="635" width="1" height="17" fill="#c4c4c4"/><rect x="1725" y="635" width="1" height="17" fill="#c4c4c4"/></g>
            ${names.map((n, i) => n === null ? '' : `<rect class="px" x="${X_GRID[i]}" y="635" width="1" height="6" fill="#bbb"/>`
                + (n && label(X_GRID[i] + 2, 647, i === 2 ? 34 : 29, n, '#444', i === 2 ? 'font-weight="bold"' : ''))).join('')}
            ${label(1670, 648, 47, '15:30:00', '#444')}
        </svg>`;
    }
}
customElements.define('time-axis', TimeAxis);

class ScrollRow extends BaseElement {
    render() {
        const tools = ['zoomout', 'zoomin', 'letter', 'gear', 'hammer', 'addchart', 'excel', 'table', 'panel', 'wave', 'cross', 'dash', 'pipe', 'line', 'erase1', 'eraseall', 'windows', 'zoom', 'level', 'updown', 'expand', 'type', 'clock'];
        return `<style>
            :host { display: flex; align-items: center; height: 14px; flex: none; border: solid #c4c4c4; border-width: 0 1px 1px 0; }
            .btn, .thumb { box-sizing: border-box; height: 14px; background: #f4f4f4; border: 1px solid; border-color: #eee #666 #666 #eee; }
            .btn { width: 17px; }
            .track { width: 663px; height: 14px; background: repeating-conic-gradient(#f0f0f0 0 25%, #fff 0 50%) 0 0/2px 2px; }
            .thumb { width: 535px; background: #ededed; border-color: #888 #666 #666 #888; }
            .track { width: 665px; }
            .play { margin-right: 2px; }
            .slider { display: block; margin: 0 5px 0 5px; }
            .t { width: 16.020px; height: 14px; display: flex; align-items: center; justify-content: center; box-sizing: border-box; }
            .t.on { border: 1px solid #bbb; background: #f0f0f0; }
            .t ui-icon { width: 13px; height: 13px; }
        </style>
        <div class="btn"><ui-icon name="left1" style="margin-top:-2px"></ui-icon></div>
        <div class="track"></div><div class="thumb"></div>
        <div class="btn"><ui-icon name="right1" style="margin-top:-2px"></ui-icon></div>
        <ui-icon name="first" style="margin-left:3px" class="play"></ui-icon><ui-icon name="pause" class="play"></ui-icon><ui-icon name="last"></ui-icon>
        <svg class="slider" width="62" height="14" shape-rendering="crispEdges"><path d="M1 1.500h60" stroke="#555"/><path d="M1 11.500h61" stroke="#222" stroke-width="3" stroke-dasharray="1 3"/><path d="M25.500 .500h4v7l-2 2-2-2z" fill="#fff" stroke="#000"/></svg>
        ${tools.map(n => `<div class="t${n === 'cross' || n === 'type' ? ' on' : ''}"><ui-icon name="${n}"></ui-icon></div>`).join('')}`;
    }
}
customElements.define('scroll-row', ScrollRow);

class SideTools extends BaseElement {
    render() {
        const names = ['chart', 'plusline', 'hline', 'vline', 'line', 'auto', 'textplus', 'all', 'candles', 'findi', 'findlist', 'findchart', 'peaks', 'trend', 'bars1', 'bars2', 'back', 'forward', 'zoom'];
        return `<style>
            :host { display: flex; flex-direction: column; box-sizing: border-box; width: 28px; height: 465px; border: 1px solid #c4c4c4; background: #fafafa; }
            div { display: flex; flex-direction: column; align-items: center; }
            .top { gap: 8px; height: 40px; padding-top: 4px; border-bottom: 1px solid #c4c4c4; }
            .rest { gap: 8px; padding-top: 4px; }
            ui-icon[name=gear] { width: 12px; height: 12px; margin-top: 1px; }
        </style>
        <div class="top"><ui-icon name="cycle"></ui-icon><ui-icon name="gear"></ui-icon></div>
        <div class="rest">${names.map(n => `<ui-icon name="${n}"></ui-icon>`).join('')}</div>`;
    }
}
customElements.define('side-tools', SideTools);

class ChartWindow extends BaseElement {
    render() {
        return `<style>
            :host { display: flex; flex-direction: column; box-sizing: border-box; width: 1767px; height: 675px; background: #fafafa; border: solid #555; border-width: 0 1px 2px 0; }
            .body { display: flex; margin-left: 6px; gap: 6px; }
            .chart { display: flex; flex-direction: column; width: 1720px; }
            .panes { border-left: 1px solid #c4c4c4; }
        </style>
        <window-bar><fit-text w="110">[0572] 매매일지차트</fit-text></window-bar>
        <toolbar-main></toolbar-main>
        <toolbar-account></toolbar-account>
        <div class="body">
            <div class="chart">
                <quote-bar></quote-bar>
                <div class="panes"><price-chart></price-chart><volume-chart></volume-chart><time-axis></time-axis><scroll-row></scroll-row></div>
            </div>
            <side-tools></side-tools>
        </div>`;
    }
}
customElements.define('chart-window', ChartWindow);

class TabStrip extends BaseElement {
    render() {
        const tabs = [['당일매매일지', 84, 71], ['기간별매매일지', 97, 83], ['기간종목별매매일지', 119, 107], ['기간종목별상세', 96, 83], ['월별손익현황', 85, 72], ['전일대비평가손익', 107, 95], ['일자별평가손익', 96, 83]];
        return `<style>
            :host { display: flex; height: 18px; border-bottom: 1px solid #77818d; color: #888; }
            div { display: flex; align-items: center; justify-content: center; box-sizing: border-box; flex: none; height: 18px; border: 1px solid #ccc; border-left-width: 0; border-bottom: 0; border-radius: 4px 4px 0 0; background: #f6f6f6; }
            div:first-child { border-left-width: 1px; }
            .on { background: #e6e9ed; color: #444b55; border: 1px solid #77818d; border-bottom: 0; }
        </style>
        ${tabs.map((t, i) => `<div class="${i === 3 ? 'on' : ''}" style="width:${t[1]}px"><fit-text w="${t[2]}">${t[0]}</fit-text></div>`).join('')}`;
    }
}
customElements.define('tab-strip', TabStrip);

class JournalForm extends BaseElement {
    render() {
        return `<style>
            :host { display: flex; align-items: center; height: 20px; color: #111; }
            .j { margin-left: -1px; } .m { margin-left: 3px; }
            .g { background: linear-gradient(#fff, #e4e4e4); }
            .act { border: 1px solid #777; border-radius: 4px; background: linear-gradient(#fff, #e0e0e0); margin-left: 2px; }
        </style>
        <tool-button field style="width:97px"><fit-text w="90">480-9978-5394-0</fit-text></tool-button>
        <tool-button class="j g" style="border-radius:0 4px 4px 0"><ui-icon name="down"></ui-icon></tool-button>
        <tool-button field style="margin-left:2px;width:79px;background:#f4f4f4"><fit-text w="36">박경환</fit-text></tool-button>
        <tool-button field style="margin-left:2px;width:60px"><fit-text w="23" style="padding-top:3px">****</fit-text></tool-button>
        <check-box checked style="margin-left:4px"></check-box>
        <tool-button class="m" field style="width:64px"><fit-text w="36">388050</fit-text></tool-button>
        <tool-button class="j g"><ui-icon name="down"></ui-icon></tool-button>
        <tool-button class="j g"><ui-icon name="find"></ui-icon></tool-button>
        <tool-button class="j" field style="width:68px"><fit-text w="46">지투파워</fit-text></tool-button>
        <fit-text w="24" style="margin-left:7px">일자</fit-text>
        <tool-button field style="margin-left:7px;width:71px;padding-left:4px"><fit-text w="60">2026/04/06</fit-text></tool-button>
        <tool-button class="j g"><ui-icon name="cal2"></ui-icon></tool-button>
        <fit-text w="8" style="margin:0 2px">~</fit-text>
        <tool-button field style="width:71px;padding-left:4px"><fit-text w="60">2026/04/06</fit-text></tool-button>
        <tool-button class="j g"><ui-icon name="cal2"></ui-icon></tool-button>
        <check-box checked style="margin-left:6px"></check-box>
        <fit-text w="47" style="margin-left:3px">매매비용</fit-text>
        <tool-button class="act" style="width:34px;margin-left:auto"><fit-text w="23">당일</fit-text></tool-button>
        <tool-button class="act" style="width:46px"><fit-text w="35">기간별</fit-text></tool-button>
        <tool-button class="act" style="width:34px"><fit-text w="23">조회</fit-text></tool-button>`;
    }
}
customElements.define('journal-form', JournalForm);

class JournalTable extends BaseElement {
    render() {
        const t = (w, s) => `<fit-text w="${w}">${s}</fit-text>`;
        const cells = [['2026/04/06', 60], ['지투파워(유통)', 81], ['359', 18], ['12,852', 33], ['4,614,210', 50], ['359', 18], ['12,969', 33], ['4,656,100', 50], ['9,648', 28], ['32,242', 34, 1], ['0.70', 22, 1]];
        return `<style>
            :host { display: flex; box-sizing: border-box; height: 66px; border: 1px solid #c0c0c8; background: #f4f4f4; color: #111; }
            .grid { display: grid; grid-template-columns: 68px 120px 65px 77px 89px 66px 75px 90px 90px 74px 76px; grid-template-rows: 18px 18px 19px 9px; flex: none; }
            .grid > div { display: flex; align-items: center; justify-content: center; box-sizing: border-box; border: solid #c6c6cc; border-width: 0 1px 1px 0; }
            .h { background: #ebeaf0; grid-row: span 2; }
            .buy { background: #f6d7d9; color: #d40000; grid-column: span 3; }
            .sell { background: #d8e8f7; color: #0038c8; grid-column: span 3; }
            .b2 { background: #ffecec; color: #d40000; } .s2 { background: #e8f0fc; color: #0038c8; }
            .grid > .c { background: #fff; justify-content: flex-end; padding-right: 3px; border-bottom: 0; }
            .grid > .e { border-bottom: 0; }
            .grid > .l { justify-content: flex-start; padding: 0 0 0 4px; }
            .grid > .red { color: #d40000; }
            aside { display: flex; flex-direction: column; align-items: center; width: 16px; background: #f4f4f4; margin-left: 1px; }
            aside i { width: 15px; height: 18px; background: #ccc; margin-bottom: auto; }
        </style>
        <div class="grid">
            <div class="h">${t(24, '일자')}</div><div class="h">${t(35, '종목명')}</div>
            <div class="buy">${t(66, '기간 중 매수')}</div><div class="sell">${t(66, '기간 중 매도')}</div>
            <div class="h">${t(47, '매매비용')}</div><div class="h">${t(47, '손익금액')}</div><div class="h">${t(35, '수익률')}</div>
            <div class="b2">${t(23, '수량')}</div><div class="b2">${t(47, '평균단가')}</div><div class="b2">${t(47, '매수금액')}</div>
            <div class="s2">${t(23, '수량')}</div><div class="s2">${t(47, '평균단가')}</div><div class="s2">${t(47, '매도금액')}</div>
            ${cells.map((c, i) => `<div class="c${i < 2 ? ' l' : ''}${c[2] ? ' red' : ''}">${t(c[1], c[0])}</div>`).join('')}
            ${cells.map(() => '<div class="e"></div>').join('')}
        </div>
        <aside><ui-icon name="up" style="margin:2px 0 1px"></ui-icon><i></i><ui-icon name="down" style="margin-bottom:2px"></ui-icon></aside>`;
    }
}
customElements.define('journal-table', JournalTable);

class JournalWindow extends BaseElement {
    render() {
        return `<style>
            :host { display: flex; flex-direction: column; box-sizing: border-box; width: 917px; height: 192px; background: #fafafa; border: 1px solid #555; }
            main { display: flex; flex-direction: column; padding: 4px 3px 0 3px; }
            journal-form { margin: 3px 0; }
            .box { display: flex; align-items: center; box-sizing: border-box; border: 1px solid #b0b0b0; color: #222; }
            .note { height: 24px; margin-top: 3px; padding-left: 12px; }
            .note i { width: 4px; height: 4px; box-sizing: border-box; border: 1px solid #777; flex: none; margin-right: 6px; }
            .state { height: 20px; margin-top: 3px; padding-left: 4px; }
        </style>
        <window-bar idle><fit-text w="189">[0615] 기간 종목별 매매일지(상세)</fit-text></window-bar>
        <main>
            <tab-strip></tab-strip>
            <journal-form></journal-form>
            <journal-table></journal-table>
            <div class="box note">
                <i></i><fit-text w="343">기간별 종목별 매매일지는 2017년 1월 1일부터 조회 가능합니다.</fit-text>
                <i style="margin-left:93px"></i><fit-text w="205">기간 설정은 최대 2년까지 가능합니다.</fit-text>
            </div>
            <div class="box state"><fit-text w="223">MA2795 조회가 완료 되었습니다. [13_13]</fit-text></div>
        </main>`;
    }
}
customElements.define('journal-window', JournalWindow);

class MiniWindow extends BaseElement {
    render() {
        return `<style>
            :host { display: flex; align-items: flex-start; box-sizing: border-box; width: 159px; height: 26px; padding: 4px 4px 0 3px; gap: 2px; overflow: hidden; border: 1px solid #444; border-bottom: 0; border-radius: 5px 5px 0 0; background: linear-gradient(#c2d0de, #b4c6d8); }
            b { box-sizing: border-box; width: 16px; height: 16px; border: 1px solid #444; border-bottom: 0; background: #c06a00; }
            b { color: #fff; font: bold 14px/15px "Liberation Sans"; text-align: center; }
            span { width: 32px; height: 12px; padding: 4px 0 0 4px; box-sizing: content-box; font: 13px/12px ${FONT}; color: #98a2ac; letter-spacing: 1px; margin-right: -5px; }
            div { flex: 1; display: flex; justify-content: center; height: 24px; padding-top: 3px; border: 1px solid #8295ac; border-radius: 3px; background: #c8d8ea; box-sizing: border-box; }
            ui-icon { width: 12px; height: 12px; }
        </style>
        <b><slot name="badge"></slot></b><span><slot></slot></span><div><ui-icon name="restore"></ui-icon></div><div><ui-icon name="smallmax"></ui-icon></div><div><ui-icon name="cross2"></ui-icon></div>`;
    }
}
customElements.define('mini-window', MiniWindow);

class TradeDesktop extends BaseElement {
    render() {
        return `<style>
            :host { display: block; position: relative; width: 1769px; height: 867px; overflow: hidden; background: #c8c8c8; font: 13px/16px ${FONT}; }
            chart-window { position: absolute; left: 0; top: 0; }
            journal-window { position: absolute; left: 326px; top: 674px; }
            .min { position: absolute; left: 156px; top: 846px; display: flex; gap: 2px; }
        </style>
        <chart-window></chart-window>
        <div class="min">
            <mini-window><i slot="badge" style="font-style:normal">1</i>[06...</mini-window>
            <mini-window></mini-window><mini-window></mini-window><mini-window></mini-window><mini-window></mini-window>
        </div>
        <journal-window></journal-window>`;
    }
}
customElements.define('trade-desktop', TradeDesktop);
</script>
</body>
</html>
